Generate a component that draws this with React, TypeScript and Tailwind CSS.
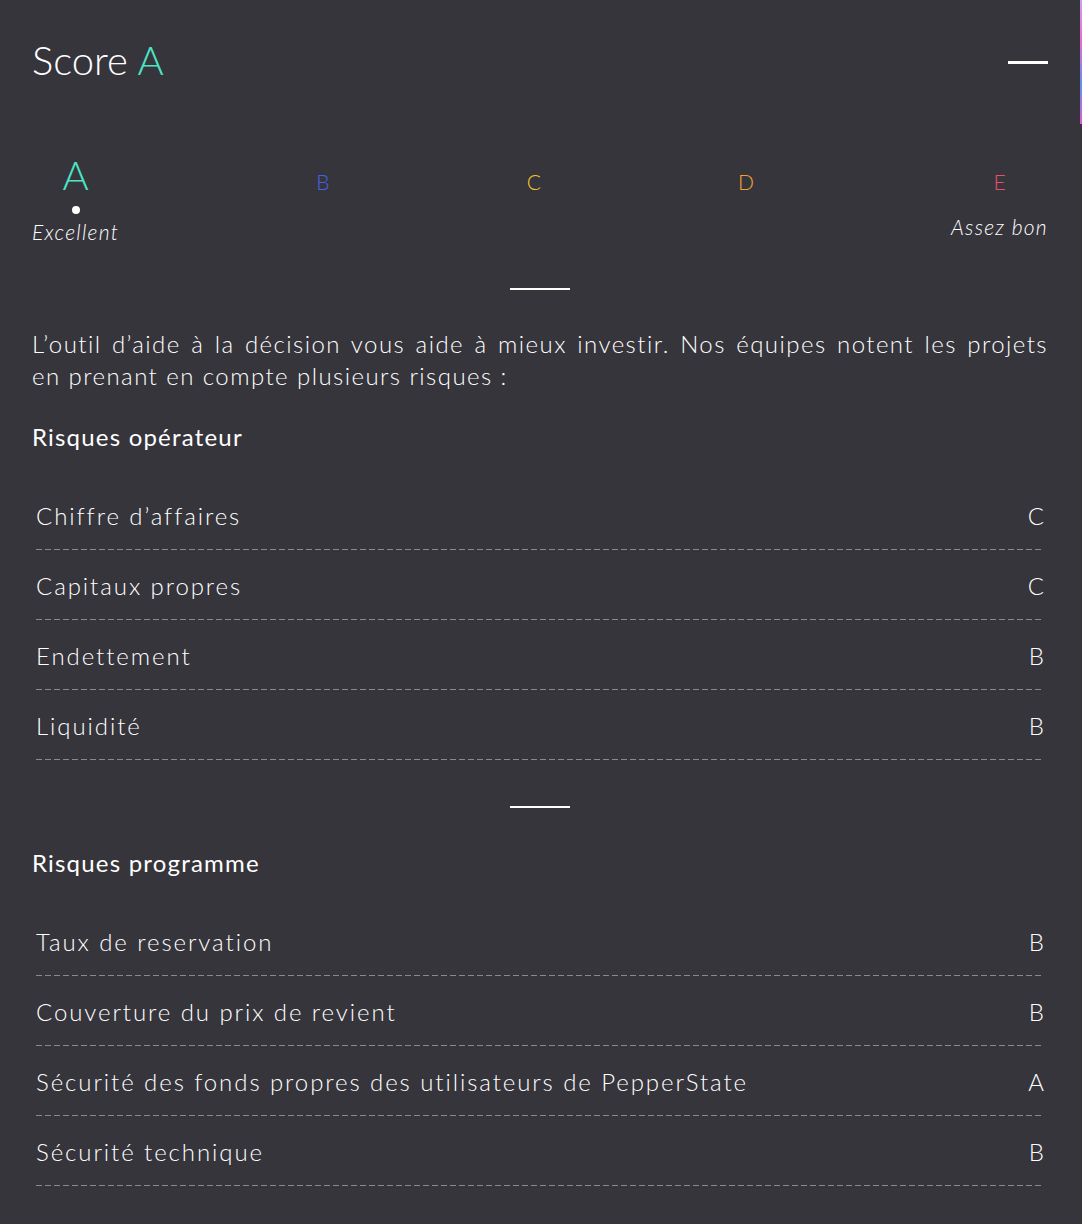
import React from 'react'

interface IRisk {
  label: string
  grade: string
}

const operatorRisks: IRisk[] = [
  { label: 'Chiffre d’affaires', grade: 'C' },
  { label: 'Capitaux propres', grade: 'C' },
  { label: 'Endettement', grade: 'B' },
  { label: 'Liquidité', grade: 'B' },
]

const programRisks: IRisk[] = [
  { label: 'Taux de reservation', grade: 'B' },
  { label: 'Couverture du prix de revient', grade: 'B' },
  { label: 'Sécurité des fonds propres des utilisateurs de PepperState', grade: 'A' },
  { label: 'Sécurité technique', grade: 'B' },
]

const Divider: React.FC = () => <div className="mx-auto h-[2px] w-[60px] bg-white" />

const RiskRow: React.FC<{ risk: IRisk }> = ({ risk }) => (
  <div className="mx-1">
    <div className="flex h-[69px] items-center justify-between pt-1 text-[24px] font-light tracking-[0.08em] text-white">
      <span>{risk.label}</span>
      <span className="tracking-normal">{risk.grade}</span>
    </div>
    <div className="h-px bg-[repeating-linear-gradient(to_right,#8a898f_0_6px,transparent_6px_9px)]" />
  </div>
)

const RiskList: React.FC<{ title: string; risks: IRisk[] }> = ({ title, risks }) => (
  <div>
    <h2 className="text-[24px] font-normal tracking-[0.05em] text-white">{title}</h2>
    <div className="mt-[25px]">
      {risks.map((r) => (
        <RiskRow key={r.label} risk={r} />
      ))}
    </div>
  </div>
)

export default function App() {
  return (
    <div className="flex min-h-[1224px] bg-[#36353c] font-['Lato',sans-serif]">
      <div className="w-[1080px] px-8">
        <div className="flex h-[120px] items-center justify-between">
          <h1 className="text-[40px] font-light text-white">
            Score <span className="text-[#4be6c4]">A</span>
          </h1>
          <div className="mt-1 h-[3px] w-10 bg-white" />
        </div>

        <div className="mt-[36px] flex items-start justify-between">
          <div className="flex flex-col items-center">
            <span className="h-[38px] text-[40px] font-light leading-[38px] text-[#4be6c4]">A</span>
            <span className="mt-[12px] h-2 w-2 rounded-full bg-white" />
            <span className="mt-[2px] text-[21px] font-light italic tracking-[0.06em] text-white">Excellent</span>
          </div>
          <span className="mt-[15px] text-[21px] font-light leading-[21px] text-[#4262e4]">B</span>
          <span className="mt-[15px] text-[21px] font-light leading-[21px] text-[#f3c42c]">C</span>
          <span className="mt-[15px] text-[21px] font-light leading-[21px] text-[#f0a631]">D</span>
          <div className="flex flex-col items-center">
            <span className="mt-[15px] text-[21px] font-light leading-[21px] text-[#e74f6c]">E</span>
            <span className="mt-[19px] text-[21px] font-light italic tracking-[0.06em] text-white">Assez bon</span>
          </div>
        </div>

        <div className="mt-[40px]">
          <Divider />
        </div>

        <p className="mt-[38px] text-justify text-[24px] font-light leading-[32px] tracking-[0.06em] text-white">
          L’outil d’aide à la décision vous aide à mieux investir. Nos équipes notent les projets en prenant en compte
          plusieurs risques :
        </p>

        <div className="mt-[27px]">
          <RiskList title="Risques opérateur" risks={operatorRisks} />
        </div>

        <div className="mt-[46px]">
          <Divider />
        </div>

        <div className="mt-[37px]">
          <RiskList title="Risques programme" risks={programRisks} />
        </div>
      </div>
      <div className="w-[2px]">
        <div className="h-[124px] bg-[linear-gradient(to_bottom,#c9a0f0,#e86ad0,#5f8ff0,#e05cc8)]" />
      </div>
    </div>
  )
}
